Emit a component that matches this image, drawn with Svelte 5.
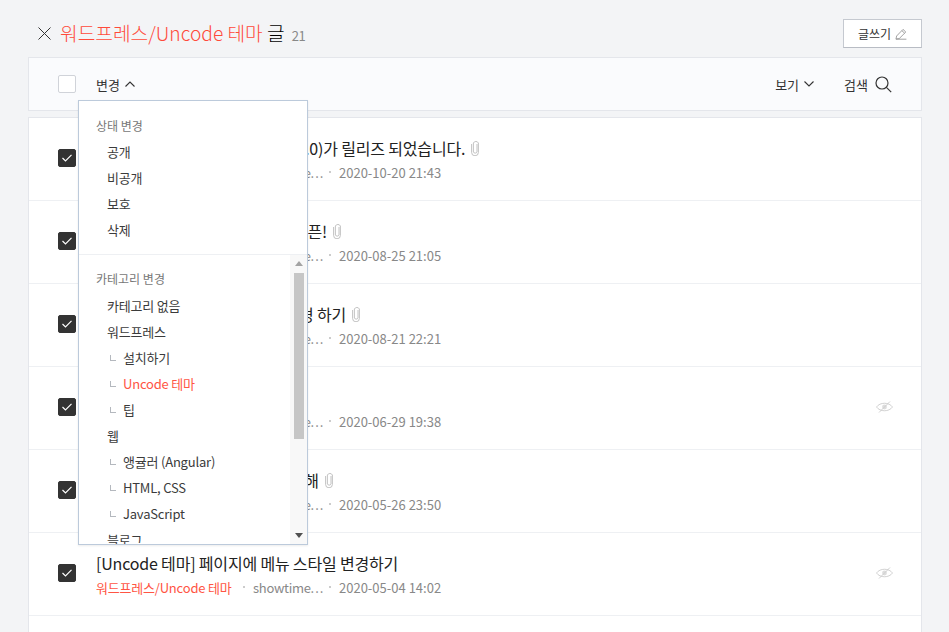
<script>
    const posts = [
        { title: '[Uncode 테마] Uncode 버전 (2.0)가 릴리즈 되었습니다.', date: '2020-10-20 21:43', clip: true },
        { title: '[Uncode 테마] 새로운 사이트 오픈!', date: '2020-08-25 21:05', clip: true },
        { title: '[Uncode 테마] 블로그 Page 변경 하기', date: '2020-08-21 22:21', clip: true },
        { title: '[Uncode 테마] 메뉴 스타일', date: '2020-06-29 19:38', hidden: true },
        { title: '[Uncode 테마] Fonts 사용에 대해', date: '2020-05-26 23:50', clip: true },
        { title: '[Uncode 테마] 페이지에 메뉴 스타일 변경하기', date: '2020-05-04 14:02', hidden: true },
    ];

    const states = ['공개', '비공개', '보호', '삭제'];

    const categories = [
        { name: '카테고리 없음' },
        { name: '워드프레스' },
        { name: '설치하기', sub: true },
        { name: 'Uncode 테마', sub: true, active: true },
        { name: '팁', sub: true },
        { name: '웹' },
        { name: '앵귤러 (Angular)', sub: true },
        { name: 'HTML, CSS', sub: true },
        { name: 'JavaScript', sub: true },
        { name: '블로그' },
    ];
</script>

<div class="page">
    <header class="head">
        <div class="head-title">
            <button class="close" aria-label="닫기">
                <svg width="13" height="13" viewBox="0 0 13 13"><path d="M0.5 0.5 L12.5 12.5 M12.5 0.5 L0.5 12.5" stroke="#333" stroke-width="1" fill="none" /></svg>
            </button>
            <h1><em>워드프레스/Uncode 테마</em> 글</h1>
            <span class="count">21</span>
        </div>
        <button class="write">
            글쓰기
            <svg width="12" height="12" viewBox="0 0 12 12"><path d="M1 11 L1.6 8 L8 1.4 L10.8 4 L4.2 10.6 Z M0.8 11.2 H11.4 M6.8 2.6 L9.6 5.2" stroke="#999" stroke-width="0.9" fill="none" /></svg>
        </button>
    </header>

    <div class="toolbar">
        <div class="tool-left">
            <span class="check"></span>
            <span class="tool">
                변경
                <svg width="10" height="6" viewBox="0 0 10 6"><path d="M0.5 5.5 L5 1 L9.5 5.5" stroke="#333" stroke-width="1.1" fill="none" /></svg>
            </span>
        </div>
        <div class="tool-right">
            <span class="tool">
                보기
                <svg width="10" height="6" viewBox="0 0 10 6"><path d="M0.5 0.5 L5 5 L9.5 0.5" stroke="#333" stroke-width="1.1" fill="none" /></svg>
            </span>
            <span class="tool search">
                검색
                <svg width="17" height="17" viewBox="0 0 17 17"><circle cx="7" cy="7" r="6" stroke="#333" stroke-width="1.2" fill="none" /><path d="M11.4 11.4 L16.2 16.2" stroke="#333" stroke-width="1.2" /></svg>
            </span>
        </div>

        <div class="menu">
            <div class="menu-top">
                <div class="group">상태 변경</div>
                {#each states as s}
                    <div class="item">{s}</div>
                {/each}
            </div>
            <div class="menu-scroll">
                <div class="menu-list">
                    <div class="group">카테고리 변경</div>
                    {#each categories as c}
                        <div class="item" class:sub={c.sub} class:active={c.active}>{c.name}</div>
                    {/each}
                </div>
                <div class="scrollbar">
                    <span class="arrow up"></span>
                    <span class="thumb"></span>
                    <span class="arrow down"></span>
                </div>
            </div>
        </div>
    </div>

    <ul class="list">
        {#each posts as p}
            <li class="row">
                <span class="check on">
                    <svg width="12" height="10" viewBox="0 0 12 10"><path d="M1.5 5 L4.5 8 L10.5 1.8" stroke="#fff" stroke-width="1.2" fill="none" /></svg>
                </span>
                <div class="post">
                    <div class="post-title">
                        {p.title}
                        {#if p.clip}
                            <svg class="clip" width="8" height="16" viewBox="0 0 8 16"><path d="M6 4 V12 A2 2 0 0 1 2.4 12 V3 A2.8 2.8 0 0 1 7.4 3 V12.4 A3.4 3.4 0 0 1 0.6 12.4 V4" stroke="#bbb" stroke-width="0.9" fill="none" /></svg>
                        {/if}
                    </div>
                    <div class="meta">
                        <span class="cat">워드프레스/Uncode 테마</span>
                        <span class="author">showtime<span class="dots">...</span></span>
                        <span class="date">{p.date}</span>
                    </div>
                </div>
                {#if p.hidden}
                    <svg class="eye" width="17" height="12" viewBox="0 0 17 12"><path d="M0.5 6 C4 1 13 1 16.5 6 C13 11 4 11 0.5 6 Z" stroke="#ccc" stroke-width="0.9" fill="none" /><circle cx="8.5" cy="6" r="2.4" fill="#ddd" /><path d="M3 11.5 L14 0.5" stroke="#ccc" stroke-width="0.9" /></svg>
                {/if}
            </li>
        {/each}
    </ul>
</div>

<style>
    :global(body) {
        background: #f3f4f6;
        overflow: hidden;
    }

    .page {
        height: 632px;
        overflow: hidden;
        box-sizing: border-box;
        padding: 19px 27px 0 28px;
        font-family: "Noto Sans CJK KR", "Noto Sans", sans-serif;
        color: #333;
    }

    .head {
        display: flex;
        justify-content: space-between;
        align-items: flex-start;
        height: 38px;
    }

    .head-title {
        display: flex;
        align-items: baseline;
        padding-left: 10px;
    }

    .close {
        border: 0;
        padding: 0;
        background: none;
        width: 22px;
        height: 13px;
        text-align: left;
        align-self: center;
    }

    h1 {
        margin: 0;
        font-size: 19.2px;
        font-weight: 300;
        line-height: 28px;
        color: #000;
    }

    h1 em {
        font-style: normal;
        color: #ff4a3a;
    }

    .count {
        margin-left: 7px;
        font-size: 13px;
        letter-spacing: -0.3px;
        color: #888;
    }

    .write {
        display: flex;
        align-items: center;
        justify-content: center;
        gap: 4px;
        width: 79px;
        height: 29px;
        box-sizing: border-box;
        border: 1px solid #c5c9d0;
        border-bottom-color: #b8bcc4;
        background: #fff;
        font: inherit;
        font-size: 12px;
        color: #333;
        padding: 0;
    }

    .toolbar {
        position: relative;
        display: flex;
        justify-content: space-between;
        align-items: center;
        height: 54px;
        box-sizing: border-box;
        border: 1px solid #e4e6eb;
        background: #fafbfd;
        padding: 0 29px;
    }

    .tool-left,
    .tool-right {
        display: flex;
        align-items: center;
    }

    .tool-left {
        gap: 20px;
    }

    .tool-right {
        gap: 30px;
    }

    .tool {
        display: flex;
        align-items: center;
        gap: 5px;
        font-size: 13px;
    }

    .search {
        gap: 7px;
    }

    .check {
        display: flex;
        align-items: center;
        justify-content: center;
        flex: none;
        width: 18px;
        height: 18px;
        box-sizing: border-box;
        border: 1px solid #d0d3d9;
        border-radius: 2px;
        background: #fff;
    }

    .check.on {
        background: #333;
        border-color: #333;
        margin-top: 13px;
    }

    .menu {
        position: absolute;
        left: 49px;
        top: 42px;
        z-index: 2;
        width: 230px;
        height: 445px;
        box-sizing: border-box;
        overflow: hidden;
        border: 1px solid #bccadb;
        background: #fff;
        box-shadow: 0 1px 2px rgba(0, 0, 0, 0.08);
    }

    .menu-top {
        height: 154px;
        box-sizing: border-box;
        padding-top: 13px;
        border-bottom: 1px solid #eef0f3;
    }

    .menu-top .group {
        height: 25px;
    }

    .menu-scroll {
        display: flex;
        height: 289px;
    }

    .menu-list {
        flex: 1;
        overflow: hidden;
        padding-top: 12px;
    }

    .group {
        height: 24px;
        padding-left: 17px;
        font-size: 12px;
        line-height: 24px;
        color: #777;
    }

    .item {
        position: relative;
        height: 26px;
        padding-left: 28px;
        font-size: 13px;
        letter-spacing: -0.2px;
        line-height: 26px;
        color: #3b3b3b;
    }

    .menu-list .group {
        height: 26px;
    }

    .item.sub {
        padding-left: 44px;
    }

    .item.sub::before {
        content: '';
        position: absolute;
        left: 31px;
        top: 10px;
        width: 5px;
        height: 5px;
        border-left: 1px solid #b4b8be;
        border-bottom: 1px solid #b4b8be;
    }

    .item.active {
        color: #ff5544;
    }

    .scrollbar {
        display: flex;
        flex-direction: column;
        align-items: center;
        flex: none;
        width: 17px;
        background: #f8f8f8;
    }

    .arrow {
        flex: none;
        width: 0;
        height: 0;
        border-left: 4px solid transparent;
        border-right: 4px solid transparent;
    }

    .arrow.up {
        margin-top: 6px;
        border-bottom: 5px solid #a3a3a3;
    }

    .arrow.down {
        margin-top: auto;
        margin-bottom: 6px;
        border-top: 5px solid #505050;
    }

    .thumb {
        width: 10px;
        height: 166px;
        margin-top: 7px;
        background: #c6c6c6;
    }

    .list {
        list-style: none;
        margin: 6px 0 0;
        padding: 0;
        min-height: 520px;
        background: #fff;
        border: 1px solid #e4e6eb;
        border-bottom: 0;
    }

    .row {
        display: flex;
        align-items: flex-start;
        height: 83px;
        box-sizing: border-box;
        padding: 18px 28px 0 29px;
        border-bottom: 1px solid #eef0f3;
    }

    .post {
        flex: 1;
        margin-left: 20px;
    }

    .post-title {
        display: flex;
        align-items: center;
        gap: 6px;
        font-size: 16px;
        letter-spacing: -0.18px;
        line-height: 24px;
        color: #222;
    }

    .meta {
        display: flex;
        font-size: 13px;
        line-height: 20px;
        margin-top: 3px;
        color: #888;
    }

    .cat {
        color: #ff5544;
        width: 135px;
        flex: none;
        letter-spacing: -0.2px;
        white-space: nowrap;
    }

    .author {
        width: 69px;
        margin-left: 22px;
        letter-spacing: -0.3px;
        white-space: nowrap;
    }

    .dots {
        letter-spacing: 1px;
    }

    .date {
        position: relative;
        margin-left: 17px;
    }

    .author::before,
    .date::before {
        content: '';
        position: absolute;
        width: 2px;
        height: 2px;
        margin-top: 8px;
        background: #ccc;
    }

    .author::before {
        margin-left: -10px;
    }

    .date::before {
        left: -10px;
    }

    .eye {
        flex: none;
        margin-top: 16px;
    }
</style>
